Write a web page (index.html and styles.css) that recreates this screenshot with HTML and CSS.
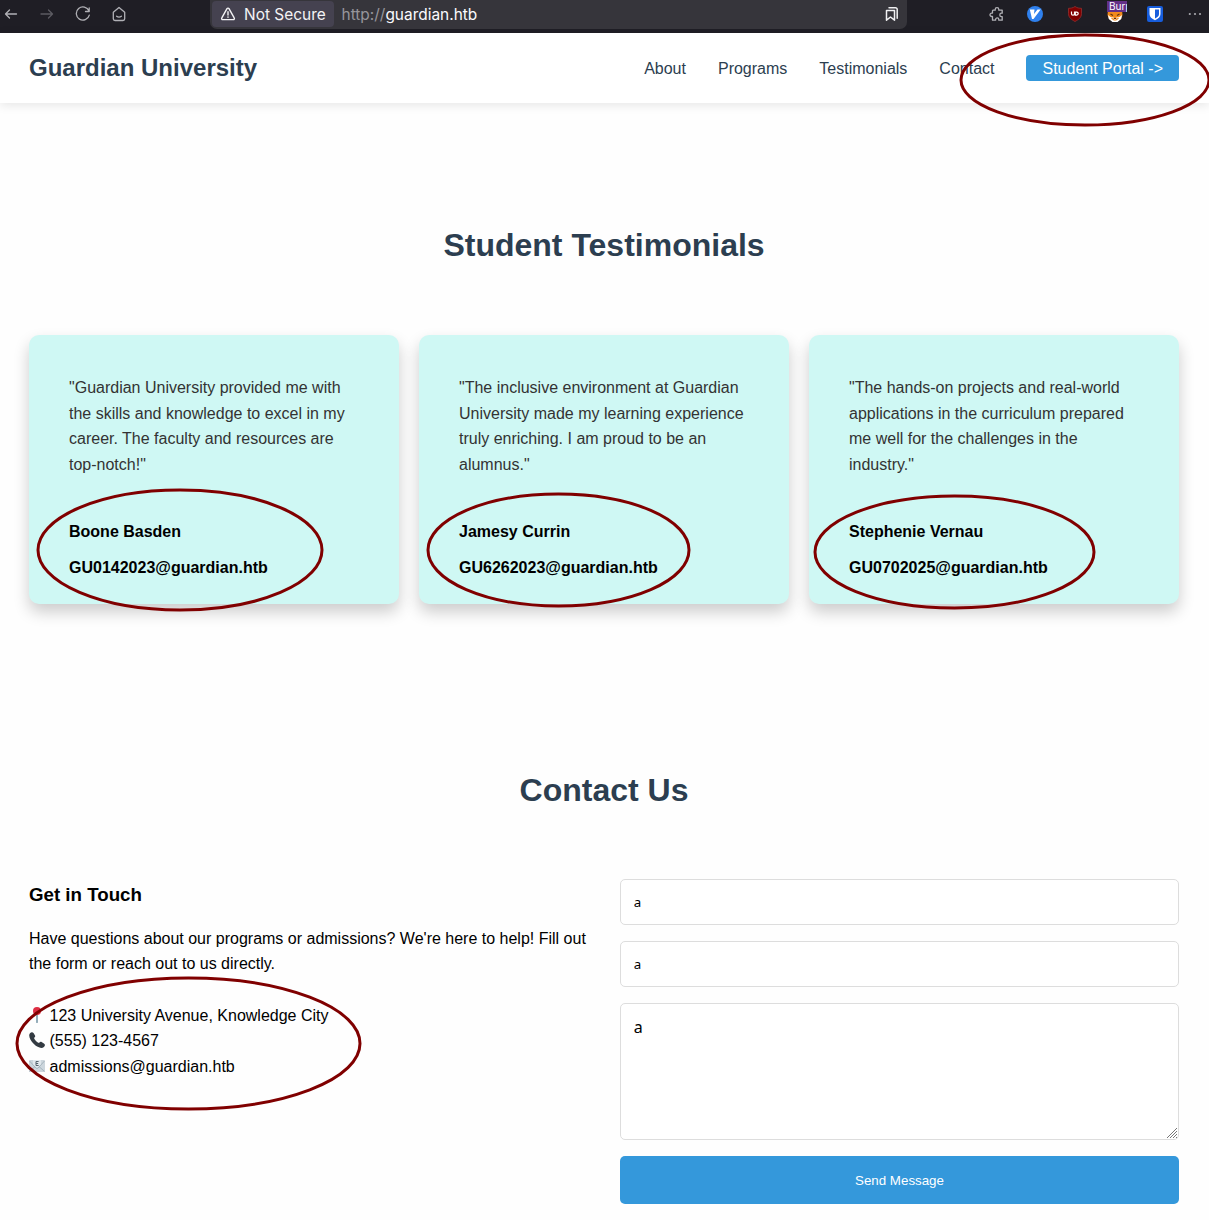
FILE: index.html
```html
<!DOCTYPE html>
<html lang="en">
<head>
<meta charset="utf-8">
<title>Guardian University</title>
<link rel="stylesheet" href="styles.css">
</head>
<body>
<div class="browser-bar">
  <div class="browser-nav">
    <svg class="ico" viewBox="0 0 16 16"><path d="M13.500 8H2.500M6.500 4L2.500 8l4 4"/></svg>
    <svg class="ico dim" viewBox="0 0 16 16"><path d="M2 8h11.500M9.500 4l4 4-4 4"/></svg>
    <svg class="ico" viewBox="0 0 16 16"><path d="M14 5A6.600 6.600 0 1 0 14.300 9.200M14.200 2v3.500h-3.700"/></svg>
    <svg class="ico" viewBox="0 0 16 16"><path d="M2.300 6.200L8 1.500l5.700 4.700v6.600a1.700 1.700 0 0 1-1.700 1.700H4a1.700 1.700 0 0 1-1.700-1.700zM5.600 10.200q2.400 1.900 4.800 0"/></svg>
  </div>
  <div class="address">
    <div class="security">
      <svg class="ico warn" viewBox="0 0 16 16"><path d="M7 2.700L1.800 11.900a1.100 1.100 0 0 0 1 1.700h10.400a1.100 1.100 0 0 0 1-1.700L9 2.700a1.150 1.150 0 0 0-2 0zM8 5.800v3.200M8 11v.3"/></svg>
      <span>Not Secure</span>
    </div>
    <div class="url"><span class="scheme">http://</span>guardian.htb</div>
    <svg class="ico saved" viewBox="0 0 16 16"><path d="M2.500 4.500h8v9.700L6.500 11l-4 3.200zM5 1.800h6.500a1.700 1.700 0 0 1 1.700 1.700v8.700"/></svg>
  </div>
  <div class="extensions">
    <svg class="ico puzzle" viewBox="0 0 16 16"><path d="M4 4.200h2.200v-.7a1.800 1.800 0 0 1 3.600 0v.7h3.400v3h-.7a1.700 1.700 0 0 0 0 3.400h.7v3.600H9.800v-.7a1.600 1.600 0 0 0-3.200 0v.7H3.500v-3.700h-.8a1.700 1.700 0 0 1 0-3.400h.8V4.700z"/></svg>
    <svg class="ext" viewBox="0 0 16 16"><circle cx="8" cy="8" r="8" fill="#2f80ed"/><path d="M2.800 3.500h4.700L7 8l3.500-4.500h3.200L6.500 13H5z" fill="#fff"/></svg>
    <svg class="ext" viewBox="0 0 16 16"><path d="M8 .5c2 1.500 4.500 1.800 6.500 1.800v5.200c0 4-2.800 6-6.500 8-3.700-2-6.500-4-6.500-8V2.300c2 0 4.500-.3 6.500-1.800z" fill="#800000" stroke="#943030" stroke-width=".8"/><path d="M4.500 5.500v2.200a1.500 1.500 0 0 0 3 0V5.500M8.300 6.100h1.400a1.500 1.500 0 0 1 0 3H8.300z" fill="none" stroke="#fff" stroke-width="1.200"/></svg>
    <div class="fox">
      <svg class="ext" viewBox="0 0 16 16"><path d="M1 4h14l.5 5-1.500 4-4 2.800H6L2 13 .5 9z" fill="#f28a1b"/><path d="M1 9l2.500 2 3 .5L8 13l1.500-1.500 3-.5L15 9l-.8 4-3.700 3h-5l-3.700-3z" fill="#fff"/><path d="M3.500 8l2.500 1.500M12.500 8L10 9.500M6.700 12.500h2.600" fill="none" stroke="#5c3010" stroke-width="1.100"/><path d="M4.500 12l2.500 2h2l2.500-2" fill="none" stroke="#f28a1b" stroke-width="1.200"/></svg>
      <span class="badge">Burp</span>
    </div>
    <svg class="ext" viewBox="0 0 16 16"><rect width="16" height="16" rx="2" fill="#175ddc"/><path d="M2.500 2h11v6c0 3-2.400 4.800-5.500 6.300C4.900 12.800 2.500 11 2.500 8z" fill="#fff"/><path d="M8 3.600h4V8c0 2-1.500 3.300-4 4.600z" fill="#175ddc"/></svg>
    <svg class="ext" viewBox="0 0 16 16"><g fill="#a9a9ae"><circle cx="2.800" cy="8" r="1.100"/><circle cx="8" cy="8" r="1.100"/><circle cx="13" cy="8" r="1.100"/></g></svg>
  </div>
</div>

<header class="site-header">
  <div class="logo">Guardian University</div>
  <nav class="links">
    <a>About</a><a>Programs</a><a>Testimonials</a><a>Contact</a><a class="portal">Student Portal -&gt;</a>
  </nav>
</header>

<main>
  <section class="testimonials">
    <h2>Student Testimonials</h2>
    <div class="cards">
      <article class="card">
        <p class="quote">"Guardian University provided me with the skills and knowledge to excel in my career. The faculty and resources are top-notch!"</p>
        <p class="who">Boone Basden</p>
        <p class="who">GU0142023@guardian.htb</p>
      </article>
      <article class="card">
        <p class="quote">"The inclusive environment at Guardian University made my learning experience truly enriching. I am proud to be an alumnus."</p>
        <p class="who">Jamesy Currin</p>
        <p class="who">GU6262023@guardian.htb</p>
      </article>
      <article class="card">
        <p class="quote">"The hands-on projects and real-world applications in the curriculum prepared me well for the challenges in the industry."</p>
        <p class="who">Stephenie Vernau</p>
        <p class="who">GU0702025@guardian.htb</p>
      </article>
    </div>
  </section>

  <section class="contact">
    <h2>Contact Us</h2>
    <div class="contact-grid">
      <div class="info">
        <h3>Get in Touch</h3>
        <p>Have questions about our programs or admissions? We're here to help! Fill out the form or reach out to us directly.</p>
        <ul class="details">
          <li><svg viewBox="0 0 16 16"><path d="M7.200 7h1.600v8.300a.8.8 0 0 1-1.600 0z" fill="#7a99a9"/><circle cx="8" cy="4" r="4" fill="#dd2e44"/></svg>123 University Avenue, Knowledge City</li>
          <li><svg viewBox="0 0 16 16"><path d="M1 1.200C2.300-.2 3.700-.2 4.700 1.300L6 3.400c.5.900.2 1.500-1 2.500.7 2 2.900 4.300 5 5.100 1-1.200 1.700-1.500 2.600-1l2.300 1.400c1.400 1 1.400 2.200 0 3.500-2.200 2.100-6.400.7-10-2.900S-1.100 3.500 1 1.200z" fill="#333b42"/></svg>(555) 123-4567</li>
          <li><svg viewBox="0 0 16 16"><rect y="2" width="16" height="12" rx="1" fill="#ccd6dd"/><path d="M.5 13.500L6 8.500M15.500 13.500L10 8.500M.5 3L7 10q1 .8 2 0l6.500-7" fill="none" stroke="#99aab5" stroke-width=".8"/><path d="M4 2h8v4.200L8.700 9.500H7.300L4 6.200z" fill="#e1e8ed"/><path d="M9.600 3.500H7v4h2.600M7 5.500h2.200" fill="none" stroke="#55636d"/></svg>admissions@guardian.htb</li>
        </ul>
      </div>
      <form class="form">
        <input type="text" value="a">
        <input type="text" value="a">
        <div class="message">
          <textarea>a</textarea>
          <svg class="grip" viewBox="0 0 12 12"><path d="M1 11L11 1M4 11l7-7M7 11l4-4M10 11l1-1"/></svg>
        </div>
        <button type="button">Send Message</button>
      </form>
    </div>
  </section>
</main>

<svg class="annotations" viewBox="0 0 1209 1220">
  <ellipse cx="1085" cy="80" rx="124" ry="45"/>
  <ellipse cx="180" cy="550" rx="142" ry="60"/>
  <ellipse cx="558.500" cy="550" rx="130.500" ry="56"/>
  <ellipse cx="954.500" cy="552" rx="139.500" ry="56"/>
  <ellipse cx="188.500" cy="1043.500" rx="171.500" ry="65.500"/>
</svg>
</body>
</html>
```
FILE: styles.css
```css
* { box-sizing: border-box; margin: 0; padding: 0; }
body {
  position: relative;
  height: 1220px;
  overflow: hidden;
  background: #fefefe;
  color: #000;
  font: 16px/25.6px "Liberation Sans", Arial, sans-serif;
}

/* Browser toolbar */
.browser-bar {
  display: flex;
  height: 33px;
  background: #1f1e25;
  font-family: Inter, sans-serif;
}
.ico { width: 16px; height: 16px; fill: none; stroke: #b1b1b6; stroke-width: 1.3; stroke-linejoin: round; stroke-linecap: round; flex: none; }
.dim { stroke: #5c5b62; }
.browser-nav { display: flex; gap: 20px; width: 210px; padding: 6px 0 0 3px; }
.address {
  display: flex;
  width: 697px;
  height: 29px;
  padding: 1px 7px 2px 2px;
  background: #36353b;
  border-radius: 0 0 7px 7px;
}
.security {
  display: flex;
  align-items: center;
  gap: 8px;
  width: 122px;
  padding-left: 8px;
  background: #454250;
  border-radius: 4px;
  color: #f3f3f5;
  white-space: nowrap;
}
.warn { stroke: #f3f3f5; stroke-width: 1.4; }
.url { flex: 1; padding: 1px 0 0 7.5px; color: #fbfbfe; line-height: 26px; font-size: 15.45px; }
.security span { padding-top: 2px; font-size: 15.45px; }
.scheme { color: #96959b; }
.saved { margin-top: 5px; stroke: #f0f0f2; stroke-width: 1.5; }
.extensions { display: flex; gap: 24px; margin-left: auto; padding: 6px 6px 0 0; }
.puzzle { margin-right: -2px; }
.ext { display: block; width: 16px; height: 16px; flex: none; }
.fox { position: relative; width: 16px; height: 16px; }
.badge {
  position: absolute;
  left: 0;
  top: -5px;
  width: 20px;
  height: 11px;
  padding-left: 2px;
  overflow: hidden;
  background: #633087;
  color: #fff;
  font: 10px/11px Inter, sans-serif;
}

/* Site header */
.site-header {
  display: flex;
  align-items: center;
  justify-content: space-between;
  height: 70px;
  padding: 0 30px 0 29px;
  background: #fff;
  box-shadow: 0 2px 10px rgba(0, 0, 0, .1);
  color: #2c3e50;
}
.logo { font-size: 24px; font-weight: bold; }
.links { display: flex; gap: 32px; }
.links a { padding-top: 1px; }
.links .portal { height: 26px; padding: 1px 16px 0; background: #3498db; border-radius: 4px; color: #fff; }

/* Sections */
main { padding: 0 30px 0 29px; }
h2 { color: #2c3e50; font-size: 32px; line-height: 51px; text-align: center; }
.testimonials { padding-top: 117px; }
.cards { display: grid; grid-template-columns: repeat(3, 1fr); gap: 20px; margin-top: 64px; }
.card {
  height: 269px;
  padding: 40px 40px 0;
  background: #cff8f4;
  border-radius: 10px;
  box-shadow: 0 8px 16px rgba(0, 0, 0, .2);
}
.quote { margin-bottom: 41.6px; color: #333; }
.who { margin-bottom: 10.4px; font-weight: bold; }

.contact { padding-top: 161px; }
.contact-grid { display: grid; grid-template-columns: 1fr 1fr; gap: 32px; margin-top: 63px; }
.info { padding-top: .6px; }
h3 { margin-bottom: 16px; font-size: 18.72px; line-height: 30px; }
.details { margin-top: 25.9px; list-style: none; }
.details li { display: flex; gap: 4.5px; }
.details svg { width: 16px; height: 16px; margin-top: 4px; }

.form { display: flex; flex-direction: column; gap: 16px; }
.form input, .form textarea {
  display: block;
  width: 100%;
  padding: 12.8px;
  background: #fff;
  border: 1px solid #ddd;
  border-radius: 5px;
  color: #000;
  font-family: "Noto Sans", sans-serif;
}
.form input { height: 46px; font-size: 13.33px; }
.message { position: relative; height: 137px; }
.form textarea { height: 137px; padding-top: 12px; font-size: 16px; line-height: 22px; resize: none; }
.grip { position: absolute; right: 1px; bottom: 1px; width: 12px; height: 12px; stroke: #777; fill: none; }
.form button {
  height: 48px;
  background: #3498db;
  border: 0;
  border-radius: 5px;
  color: #fff;
  font: 13.33px "Liberation Sans", Arial, sans-serif;
}

/* Hand-drawn highlights over the page */
.annotations { position: absolute; left: 0; top: 0; width: 1209px; height: 1220px; fill: none; stroke: #800000; stroke-width: 3; pointer-events: none; }
```
